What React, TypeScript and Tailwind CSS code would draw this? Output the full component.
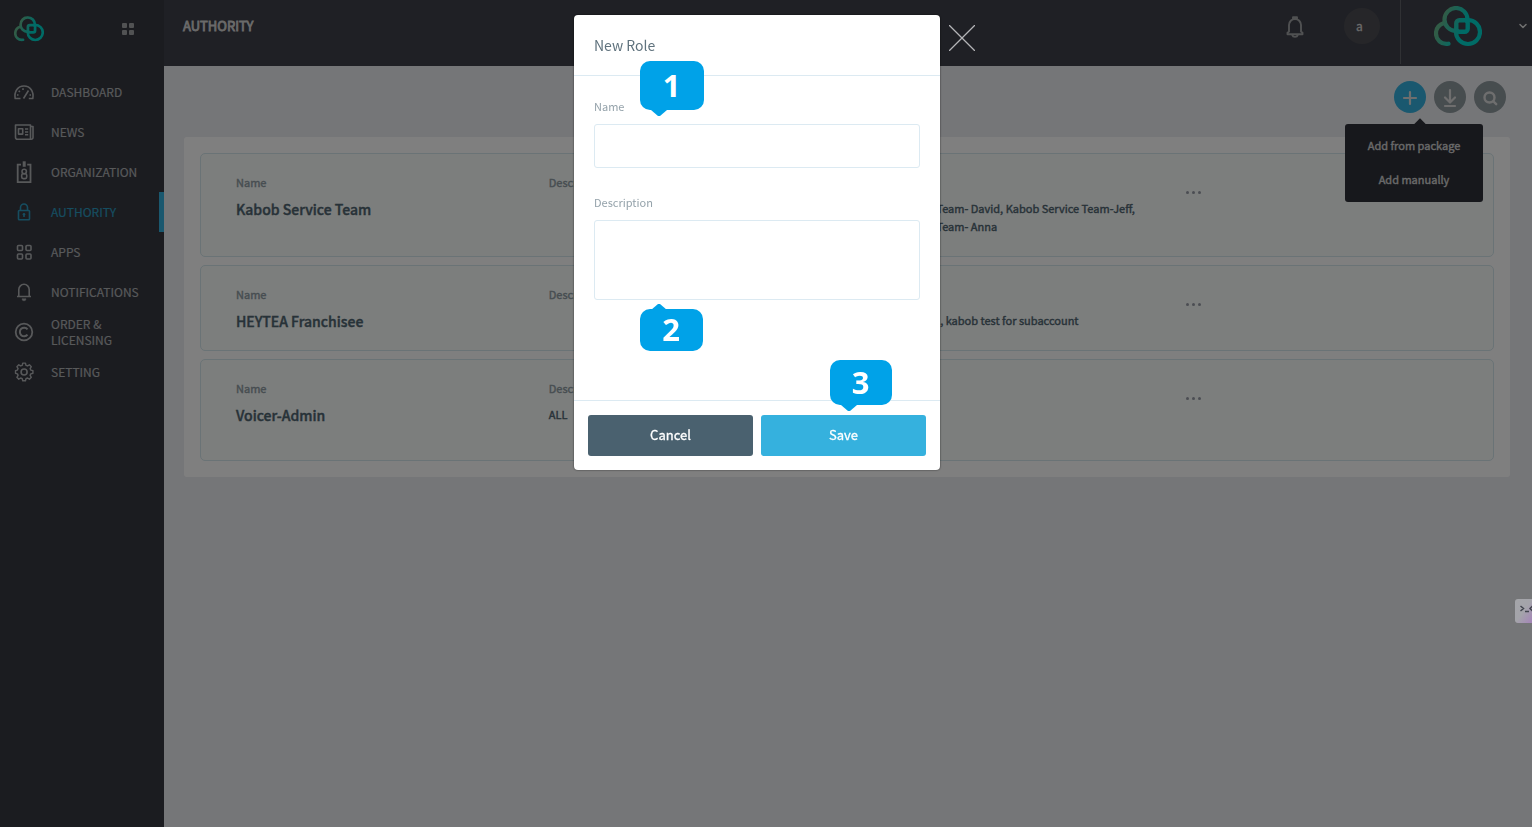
import { useId, type ReactNode } from "react";
import { ChevronDown } from "lucide-react";

function Logo({ className }: { className: string }) {
  const id = useId();
  return (
    <svg viewBox="0 0 48 41" className={className} fill="none" aria-label="Kabob" role="img">
      <defs>
        <linearGradient id={id} gradientUnits="userSpaceOnUse" x1="4" y1="14" x2="38" y2="28">
          <stop offset="0.1" stopColor="#62b88e" />
          <stop offset="0.7" stopColor="#00d6cc" />
        </linearGradient>
        <mask id={id + "m"} maskUnits="userSpaceOnUse" x="0" y="0" width="48" height="41">
          <rect width="48" height="41" fill="white" />
          <rect x="24.500" y="16.500" width="7" height="7" rx="1" fill="black" />
        </mask>
      </defs>
      <g stroke={"url(#" + id + ")"} strokeWidth="4.200" strokeLinecap="round" mask={"url(#" + id + "m)"}>
        <circle cx="22" cy="13.5" r="11.5" />
        <circle cx="34" cy="26" r="12" />
        <path d="M14.5 37.7C7 39 2 33.500 2 27.500C2 22 5.500 18.500 10 17" />
        <rect x="22.300" y="14.300" width="11.400" height="11.400" rx="3" strokeWidth="4.400" />
      </g>
    </svg>
  );
}

function Icon({ children }: { children: ReactNode }) {
  return (
    <svg viewBox="0 0 24 24" className="size-6 shrink-0" fill="none" stroke="currentColor" strokeWidth="1.6" strokeLinejoin="round" aria-hidden="true">
      {children}
    </svg>
  );
}

const navItems: { label: string; active?: boolean; icon: ReactNode }[] = [
  {
    label: "DASHBOARD",
    icon: (
      <Icon>
        <path d="M8.500 18.500H3.200C2 12 5.500 6 12 6s10 6 8.800 12.500h-4M11.500 18.500L16.500 10.500" />
        <path d="M5 15h1.500M6.700 10.700l1.200 1.200M11 8.200v1.800M17.500 15H19" />
      </Icon>
    ),
  },
  {
    label: "NEWS",
    icon: (
      <Icon>
        <path d="M3.500 5h15v14.300H5.500a2 2 0 0 1-2-2zM18.500 6.500H21v11a1.800 1.800 0 0 1-1.800 1.800H17M6.500 8.700h4.200v5.400H6.500zM13 9h3.200M13 12h3.200M13 14.800h3.200" />
      </Icon>
    ),
  },
  {
    label: "ORGANIZATION",
    icon: (
      <Icon>
        <path d="M9 4.600H5.700v17.500h12.800V4.600h-3.300" strokeWidth="1.800" strokeLinejoin="miter" />
        <path d="M12.200 1.300v5.500" strokeWidth="3" />
        <circle cx="12.200" cy="11.500" r="2.200" />
        <rect x="9.700" y="13.800" width="5" height="4.800" rx="1.500" />
      </Icon>
    ),
  },
  {
    label: "AUTHORITY",
    active: true,
    icon: (
      <Icon>
        <rect x="6.500" y="10.500" width="11" height="9.300" rx="0.8" />
        <path d="M8.500 10.500V7.500a3.500 3.500 0 0 1 7 0v3M12 14v3" />
        <circle cx="12" cy="14.300" r="1.300" fill="currentColor" stroke="none" />
      </Icon>
    ),
  },
  {
    label: "APPS",
    icon: (
      <Icon>
        <rect x="5.500" y="5.500" width="5" height="5" rx="1" />
        <rect x="14" y="5.500" width="5" height="5" rx="1" />
        <rect x="5.500" y="14" width="5" height="5" rx="1" />
        <rect x="14" y="14" width="5" height="5" rx="1" />
      </Icon>
    ),
  },
  {
    label: "NOTIFICATIONS",
    icon: (
      <Icon>
        <path d="M5 16.500h14M6.800 16.500V9.500a5.200 5.200 0 0 1 10.400 0v7" />
        <path d="M10 18.800h4a2 2 0 0 1-4 0z" fill="currentColor" strokeWidth="0.500" />
      </Icon>
    ),
  },
  {
    label: "ORDER & LICENSING",
    icon: (
      <Icon>
        <circle cx="12" cy="12" r="8.300" strokeWidth="1.800" />
        <path d="M15.500 9.300a4.300 4.300 0 1 0 0 5.400" strokeWidth="2" />
      </Icon>
    ),
  },
  {
    label: "SETTING",
    icon: (
      <Icon>
        <path d="M10.500 3.500h3l.6 2.400 1.700.7 2.100-1.300 2.100 2.100-1.300 2.100.7 1.700 2.400.6v3l-2.400.6-.7 1.700 1.300 2.100-2.100 2.100-2.100-1.300-1.700.7-.6 2.400h-3l-.6-2.400-1.700-.7-2.100 1.300L4 19.200l1.300-2.100-.7-1.700-2.100-.6v-3l2.100-.6.7-1.700L4 7.400l2.100-2.100 2.100 1.300 1.700-.7z" transform="translate(1.300 0) scale(0.900)" />
        <circle cx="12.100" cy="12" r="3" />
      </Icon>
    ),
  },
];

const roles = [
  {
    name: "Kabob Service Team",
    description: "",
    members: ["Kabob Service Team- David, Kabob Service Team-Jeff,", "Kabob Service Team- Anna"],
  },
  { name: "HEYTEA Franchisee", description: "", members: ["HEYTEA- Admin, kabob test for subaccount"] },
  { name: "Voicer-Admin", description: "ALL", members: [] },
];

function Sidebar() {
  return (
    <aside className="w-41 shrink-0 bg-[#363841]">
      <div className="flex h-18 items-start justify-between pt-4 pr-[30px] pl-3.5">
        <Logo className="h-[26px] w-[30px]" />
        <button aria-label="Switch app" className="mt-[7px] grid grid-cols-2 gap-0.5">
          {[0, 1, 2, 3].map((n) => (
            <span key={n} className="size-[5px] rounded-[1px] bg-[#a2a4a7]" />
          ))}
        </button>
      </div>
      <nav>
        {navItems.map((item) => (
          <a
            key={item.label}
            href="#"
            className={
              item.active
                ? "flex h-10 items-center gap-[15px] border-r-[5px] border-[#35b1de] pl-3 text-[12px] leading-4 text-[#2c9bc0] [-webkit-text-stroke:0.2px]"
                : "flex h-10 items-center gap-[15px] border-r-[5px] border-transparent pl-3 text-[12px] leading-4 text-[#b0b2b5] [-webkit-text-stroke:0.2px]"
            }
          >
            {item.icon}
            <span className="max-w-22">{item.label}</span>
          </a>
        ))}
      </nav>
    </aside>
  );
}

function Header() {
  return (
    <header className="flex h-[66px] items-start justify-between bg-[#3e404a] pl-[19px]">
      <h1 className="pt-[18px] text-[13px] leading-4 text-[#d4d4d4] [-webkit-text-stroke:0.8px]">AUTHORITY</h1>
      <div className="flex">
        <button aria-label="Notifications" className="mt-[15px] mr-[39px] h-6 text-[#a0a2a5]">
          <svg viewBox="0 0 20 24" className="h-6 w-5" fill="none" stroke="currentColor" strokeWidth="1.9" strokeLinejoin="round" aria-hidden="true">
            <path d="M4 16.500V10a6 6 0 0 1 12 0v6.500l1.500 1.300v1.400H2.500v-1.400zM8 4.300V2.300h4v2M7.200 20c.8 2.500 4.800 2.500 5.600 0" />
          </svg>
        </button>
        <button className="mt-2 mr-5 flex size-9 items-center justify-center rounded-full bg-[#4d4d53] pr-[5px] text-[12px] leading-4 text-[#d5d5d5] [-webkit-text-stroke:0.3px]">a</button>
        <div className="flex h-[64px] items-start border-l border-[#606269] pr-[3px] pl-[33px]">
          <Logo className="mt-1.5 h-[41px] w-12" />
          <button aria-label="Account menu" className="mt-5 ml-[35px] text-[#e0e0e0]">
            <ChevronDown className="size-3" strokeWidth={3} />
          </button>
        </div>
      </div>
    </header>
  );
}

function Toolbar() {
  return (
    <div className="flex justify-end gap-2 pt-[15px] pr-[6px] pb-6">
      <div className="relative h-8">
        <button aria-label="Add" className="flex size-8 items-center justify-center rounded-full bg-[#35b1de] text-white">
          <svg viewBox="0 0 32 32" className="size-8" stroke="#dddddd" strokeWidth="2.200" strokeLinecap="round" aria-hidden="true">
            <path d="M10 17h12M16 11v12" />
          </svg>
        </button>
        <div className="absolute top-[43px] -right-[57px] z-10 w-[138px] rounded-[3px] bg-[#2e3038] pt-1 pb-1.5 text-[11px] text-[#d4d4d4] [-webkit-text-stroke:0.4px]">
          <span className="absolute -top-1 left-[71px] size-2 rotate-45 bg-[#2e3038]" />
          <button className="block h-[34px] w-full">Add from package</button>
          <button className="block h-[34px] w-full">Add manually</button>
        </div>
      </div>
      <button aria-label="Download" className="size-8 rounded-full bg-[#8f9a9f]">
        <svg viewBox="0 0 32 32" className="size-8" fill="none" stroke="#dddddd" strokeWidth="2.200" strokeLinecap="round" strokeLinejoin="round" aria-hidden="true">
          <path d="M16 9v12M11 16.500l5 5 5-5M11 25h10" />
        </svg>
      </button>
      <button aria-label="Search" className="size-8 rounded-full bg-[#8f9a9f]">
        <svg viewBox="0 0 32 32" className="size-8" fill="none" stroke="#dddddd" strokeWidth="2.400" strokeLinecap="round" aria-hidden="true">
          <circle cx="15.500" cy="16.500" r="5" />
          <path d="M19.500 20.500l2.700 2.700" />
        </svg>
      </button>
    </div>
  );
}

function RoleCard({ name, description, members }: (typeof roles)[number]) {
  return (
    <li className="grid grid-cols-[313fr_312fr_325fr_308fr] rounded-[5px] border border-[#d4e6ec] bg-[#f8fcfa] pt-[19px] pb-[21px] pl-[35px] text-[11px] leading-[18px] text-[#4f6470] [-webkit-text-stroke:0.4px] last:min-h-[102px]">
      <div>
        <p className="text-[#8e9ba3]">Name</p>
        <h2 className="mt-[9px] -mb-px text-[14px] leading-[18px] font-medium">{name}</h2>
      </div>
      <div>
        <p className="text-[#8e9ba3]">Description</p>
        <p className="mt-2">{description}</p>
      </div>
      <div>
        {members.length > 0 && <p className="text-[#8e9ba3]">Members</p>}
        <div className="mt-2">
          {members.map((line) => (
            <p key={line}>{line}</p>
          ))}
        </div>
      </div>
      <button aria-label={"More actions for " + name} className="mt-[17px] flex h-4 items-start gap-[3px] pt-px pl-px">
        <span className="size-[3px] rounded-full bg-[#979ba6]" />
        <span className="size-[3px] rounded-full bg-[#979ba6]" />
        <span className="size-[3px] rounded-full bg-[#979ba6]" />
      </button>
    </li>
  );
}

function NewRoleDialog() {
  return (
    <div role="dialog" aria-modal="true" aria-labelledby="dialog-title" className="relative w-[366px] rounded bg-white text-[#5f727d] shadow-[0_0_2px_rgba(0,0,0,0.7)]">
      <h2 id="dialog-title" className="border-b border-[#dceaf2] px-5 py-5 text-[14px] leading-5">New Role</h2>
      <form>
        <div className="px-5 pt-[21px] pb-[100px] text-[11px] leading-[18px] text-[#94a2aa]">
          <label htmlFor="role-name" className="block">Name</label>
          <input id="role-name" className="mt-[9px] block h-11 w-full rounded-[3px] border border-[#dceaf2] px-3 text-[#4a616f] outline-none" />
          <label htmlFor="role-description" className="mt-[25px] block">Description</label>
          <textarea id="role-description" className="mt-[9px] block h-20 w-full resize-none rounded-[3px] border border-[#dceaf2] p-3 text-[#4a616f] outline-none" />
        </div>
        <div className="flex gap-2 border-t border-[#dceaf2] p-3.5 text-[13px] leading-5 text-white [-webkit-text-stroke:0.3px]">
          <button type="button" className="h-[41px] flex-1 rounded-[3px] bg-[#4a616f] pb-0.5">Cancel</button>
          <button type="button" className="h-[41px] flex-1 rounded-[3px] bg-[#35b1de] pb-0.5">Save</button>
        </div>
      </form>
      <button aria-label="Close" className="absolute top-2.5 left-[375px]">
        <svg viewBox="0 0 26 26" className="size-[26px]" stroke="#b4b4b7" strokeWidth="1.300" aria-hidden="true">
          <path d="M0 0l26 26M26 0L0 26" />
        </svg>
      </button>
      <Callout box="top-[46px] left-[66px] h-[49px] w-16" tip="-bottom-[6px] rotate-180">1</Callout>
      <Callout box="top-[294px] left-[66px] h-[42px] w-[63px]" tip="-top-[5px]">2</Callout>
      <Callout box="top-[345px] left-[256px] h-[45px] w-[62px]" tip="-bottom-[6px] rotate-180">3</Callout>
    </div>
  );
}

function Callout({ box, tip, children }: { box: string; tip: string; children: ReactNode }) {
  return (
    <div className={"absolute flex items-center justify-center rounded-[10px] bg-[#00a2e8] pr-px pb-0.5 font-['Open_Sans',sans-serif] text-[31px] leading-8 font-bold text-white " + box}>
      <svg viewBox="0 0 16 6" className={"absolute left-[11px] h-1.5 w-4 " + tip} aria-hidden="true">
        <path d="M0 6L7 0h2l7 6z" fill="#00a2e8" />
      </svg>
      {children}
    </div>
  );
}

export default function App() {
  return (
    <div className="flex min-h-screen bg-[#ebecf0] font-['Noto_Sans_CJK_SC',sans-serif]">
      <Sidebar />
      <div className="min-w-0 flex-1">
        <Header />
        <main className="px-5">
          <Toolbar />
          <ul className="mr-0.5 space-y-2 rounded-[3px] bg-white p-4">
            {roles.map((role) => (
              <RoleCard key={role.name} {...role} />
            ))}
          </ul>
        </main>
      </div>
      <div className="fixed inset-0 z-20 flex items-start justify-center bg-black/50 pt-[15px] pr-[18px]">
        <NewRoleDialog />
      </div>
      <button aria-label="Open assistant" className="fixed top-[599px] right-0 z-30 h-6 w-[17px] overflow-hidden rounded-l-[3px] bg-linear-to-br from-[#a4a5a9] via-[#a4a4aa] to-[#a484b8]">
        <svg viewBox="0 0 17 24" className="h-6 w-[17px]" fill="none" stroke="#42454e" strokeWidth="1.500" aria-hidden="true">
          <path d="M5.500 7l3 2.500-3 2.500M10 12.500h4M18 6.500l-3 3 3 3" />
        </svg>
      </button>
    </div>
  );
}
